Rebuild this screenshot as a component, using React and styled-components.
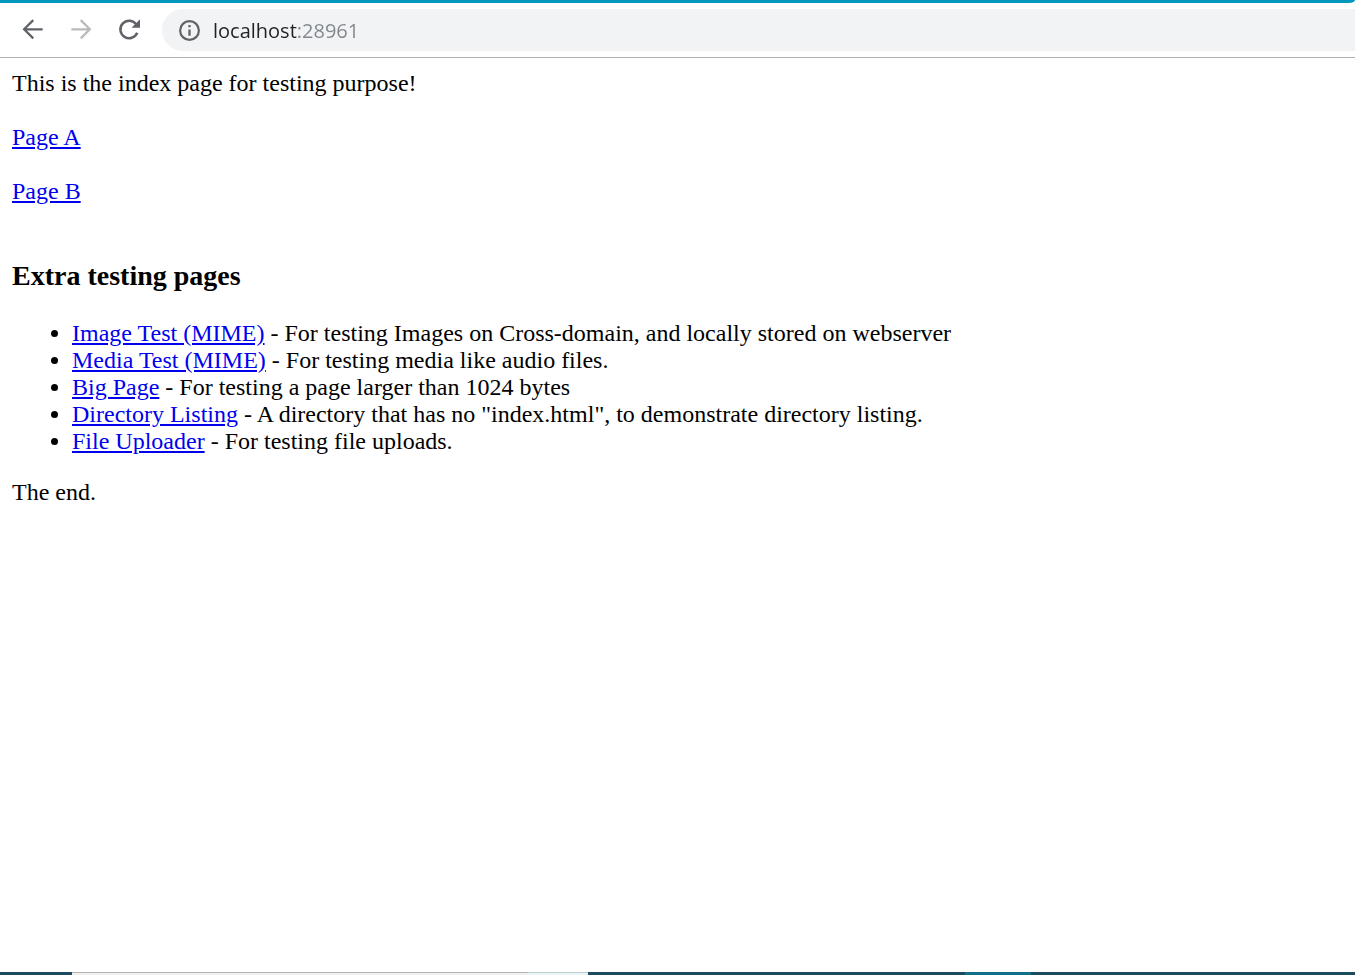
import React from "react";
import styled, { createGlobalStyle } from "styled-components";

const GlobalStyle = createGlobalStyle`
  body {
    margin: 0;
    background: #ffffff;
    color: #000000;
    font-family: "Liberation Serif", "Times New Roman", serif;
    font-size: 24px;
    line-height: 27px;
  }
`;

const Window = styled.div`
  display: flex;
  flex-direction: column;
  min-height: 100vh;
`;

const FrameEdge = styled.div`
  height: 3px;
  background: #0097bd;
  border-bottom-right-radius: 6px 3px;
`;

const Toolbar = styled.header`
  display: flex;
  align-items: center;
  gap: 18px;
  height: 54px;
  padding-left: 18px;
  border-bottom: 1px solid #b1b1b1;
`;

const NavButton = styled.button`
  display: flex;
  width: 30px;
  height: 30px;
  margin-bottom: 2px;
  padding: 0;
  border: 0;
  background: none;
  color: ${(p) => (p.disabled ? "#bababa" : "#5f6368")};
`;

const AddressBar = styled.label`
  display: flex;
  flex: 1;
  align-items: center;
  gap: 11px;
  height: 42px;
  padding-left: 15px;
  border-radius: 21px 0 0 21px;
  background: #f1f3f4;
  color: #5f6368;
`;

const AddressInput = styled.input`
  flex: 1;
  min-width: 0;
  height: 32px;
  padding: 1px 0 0;
  box-sizing: border-box;
  border: 0;
  outline: 0;
  color: #202124;
  font-family: "Open Sans", "Segoe UI", sans-serif;
  font-size: 20px;
  line-height: 30px;
  background: linear-gradient(90deg, #202124 ${(p) => p.$host}px, #80868b ${(p) => p.$host}px);
  background-clip: text;
  -webkit-background-clip: text;
  -webkit-text-fill-color: transparent;
`;

const Content = styled.main`
  flex: 1;
  padding: 12px;
`;

const Paragraph = styled.p`
  margin: 0 0 27px;
`;

const Heading = styled.h3`
  margin: 55px 0 28px;
  font-size: 28px;
  line-height: 32px;
`;

const LinkList = styled.ul`
  margin: 0 0 24px;
  padding-left: 60px;
`;

const Link = styled.a`
  color: #0000ee;
  text-decoration: underline;
`;

const Taskbar = styled.footer`
  display: flex;
  height: 3px;
`;

const tones = {
  dark: ["#1b4b5d", "#1b4b5d"],
  grey: ["#b5b5b5", "#f1f1f1"],
  pale: ["#c1cdcf", "#eaf3f5"],
  teal: ["#117089", "#117089"],
};

const Segment = styled.div`
  box-sizing: border-box;
  flex: ${(p) => p.$grow} 1 0;
  border-top: 1px solid ${(p) => tones[p.$tone][0]};
  background: ${(p) => tones[p.$tone][1]};
`;

const Icon = ({ size, children }) => (
  <svg
    width={size}
    height={size}
    viewBox="0 0 24 24"
    fill="none"
    stroke="currentColor"
    strokeWidth="1.8"
    aria-hidden="true"
  >
    {children}
  </svg>
);

const BackIcon = () => (
  <Icon size={30}>
    <path d="M19.7 12.2H5M12.2 4.9L4.9 12.2l7.3 7.3" />
  </Icon>
);

const ForwardIcon = () => (
  <Icon size={30}>
    <path d="M4.3 12.2H19M11.8 4.9l7.3 7.3-7.3 7.3" />
  </Icon>
);

const ReloadIcon = () => (
  <Icon size={30}>
    <path d="M17.6 8A7 7 0 1 0 18.6 15" strokeWidth="2" />
    <path d="M20.8 4.2v6.8H14z" fill="currentColor" stroke="none" />
  </Icon>
);

const InfoIcon = () => (
  <Icon size={25}>
    <circle cx="12" cy="12" r="9" strokeWidth="2.1" />
    <path d="M12 6.7v2.2M12 11v6" strokeWidth="2.2" />
  </Icon>
);

const pages = [
  ["Image Test (MIME)", "For testing Images on Cross-domain, and locally stored on webserver"],
  ["Media Test (MIME)", "For testing media like audio files."],
  ["Big Page", "For testing a page larger than 1024 bytes"],
  ["Directory Listing", 'A directory that has no "index.html", to demonstrate directory listing.'],
  ["File Uploader", "For testing file uploads."],
];

const segments = [
  [72, "dark"],
  [456, "grey"],
  [60, "pale"],
  [377, "dark"],
  [66, "teal"],
  [324, "dark"],
];

export default function App() {
  return (
    <Window>
      <GlobalStyle />
      <FrameEdge />
      <Toolbar>
        <NavButton type="button" aria-label="Back">
          <BackIcon />
        </NavButton>
        <NavButton type="button" aria-label="Forward" disabled>
          <ForwardIcon />
        </NavButton>
        <NavButton type="button" aria-label="Reload">
          <ReloadIcon />
        </NavButton>
        <AddressBar>
          <InfoIcon />
          <AddressInput type="text" aria-label="Address" defaultValue="localhost:28961" $host={84} />
        </AddressBar>
      </Toolbar>
      <Content>
        <Paragraph>This is the index page for testing purpose!</Paragraph>
        <Paragraph>
          <Link href="#page-a">Page A</Link>
        </Paragraph>
        <Paragraph>
          <Link href="#page-b">Page B</Link>
        </Paragraph>
        <Heading>Extra testing pages</Heading>
        <LinkList>
          {pages.map(([name, note]) => (
            <li key={name}>
              <Link href={`#${name.toLowerCase().replace(/\W+/g, "-")}`}>{name}</Link> - {note}
            </li>
          ))}
        </LinkList>
        <Paragraph>The end.</Paragraph>
      </Content>
      <Taskbar>
        {segments.map(([grow, tone], i) => (
          <Segment key={i} $grow={grow} $tone={tone} />
        ))}
      </Taskbar>
    </Window>
  );
}
